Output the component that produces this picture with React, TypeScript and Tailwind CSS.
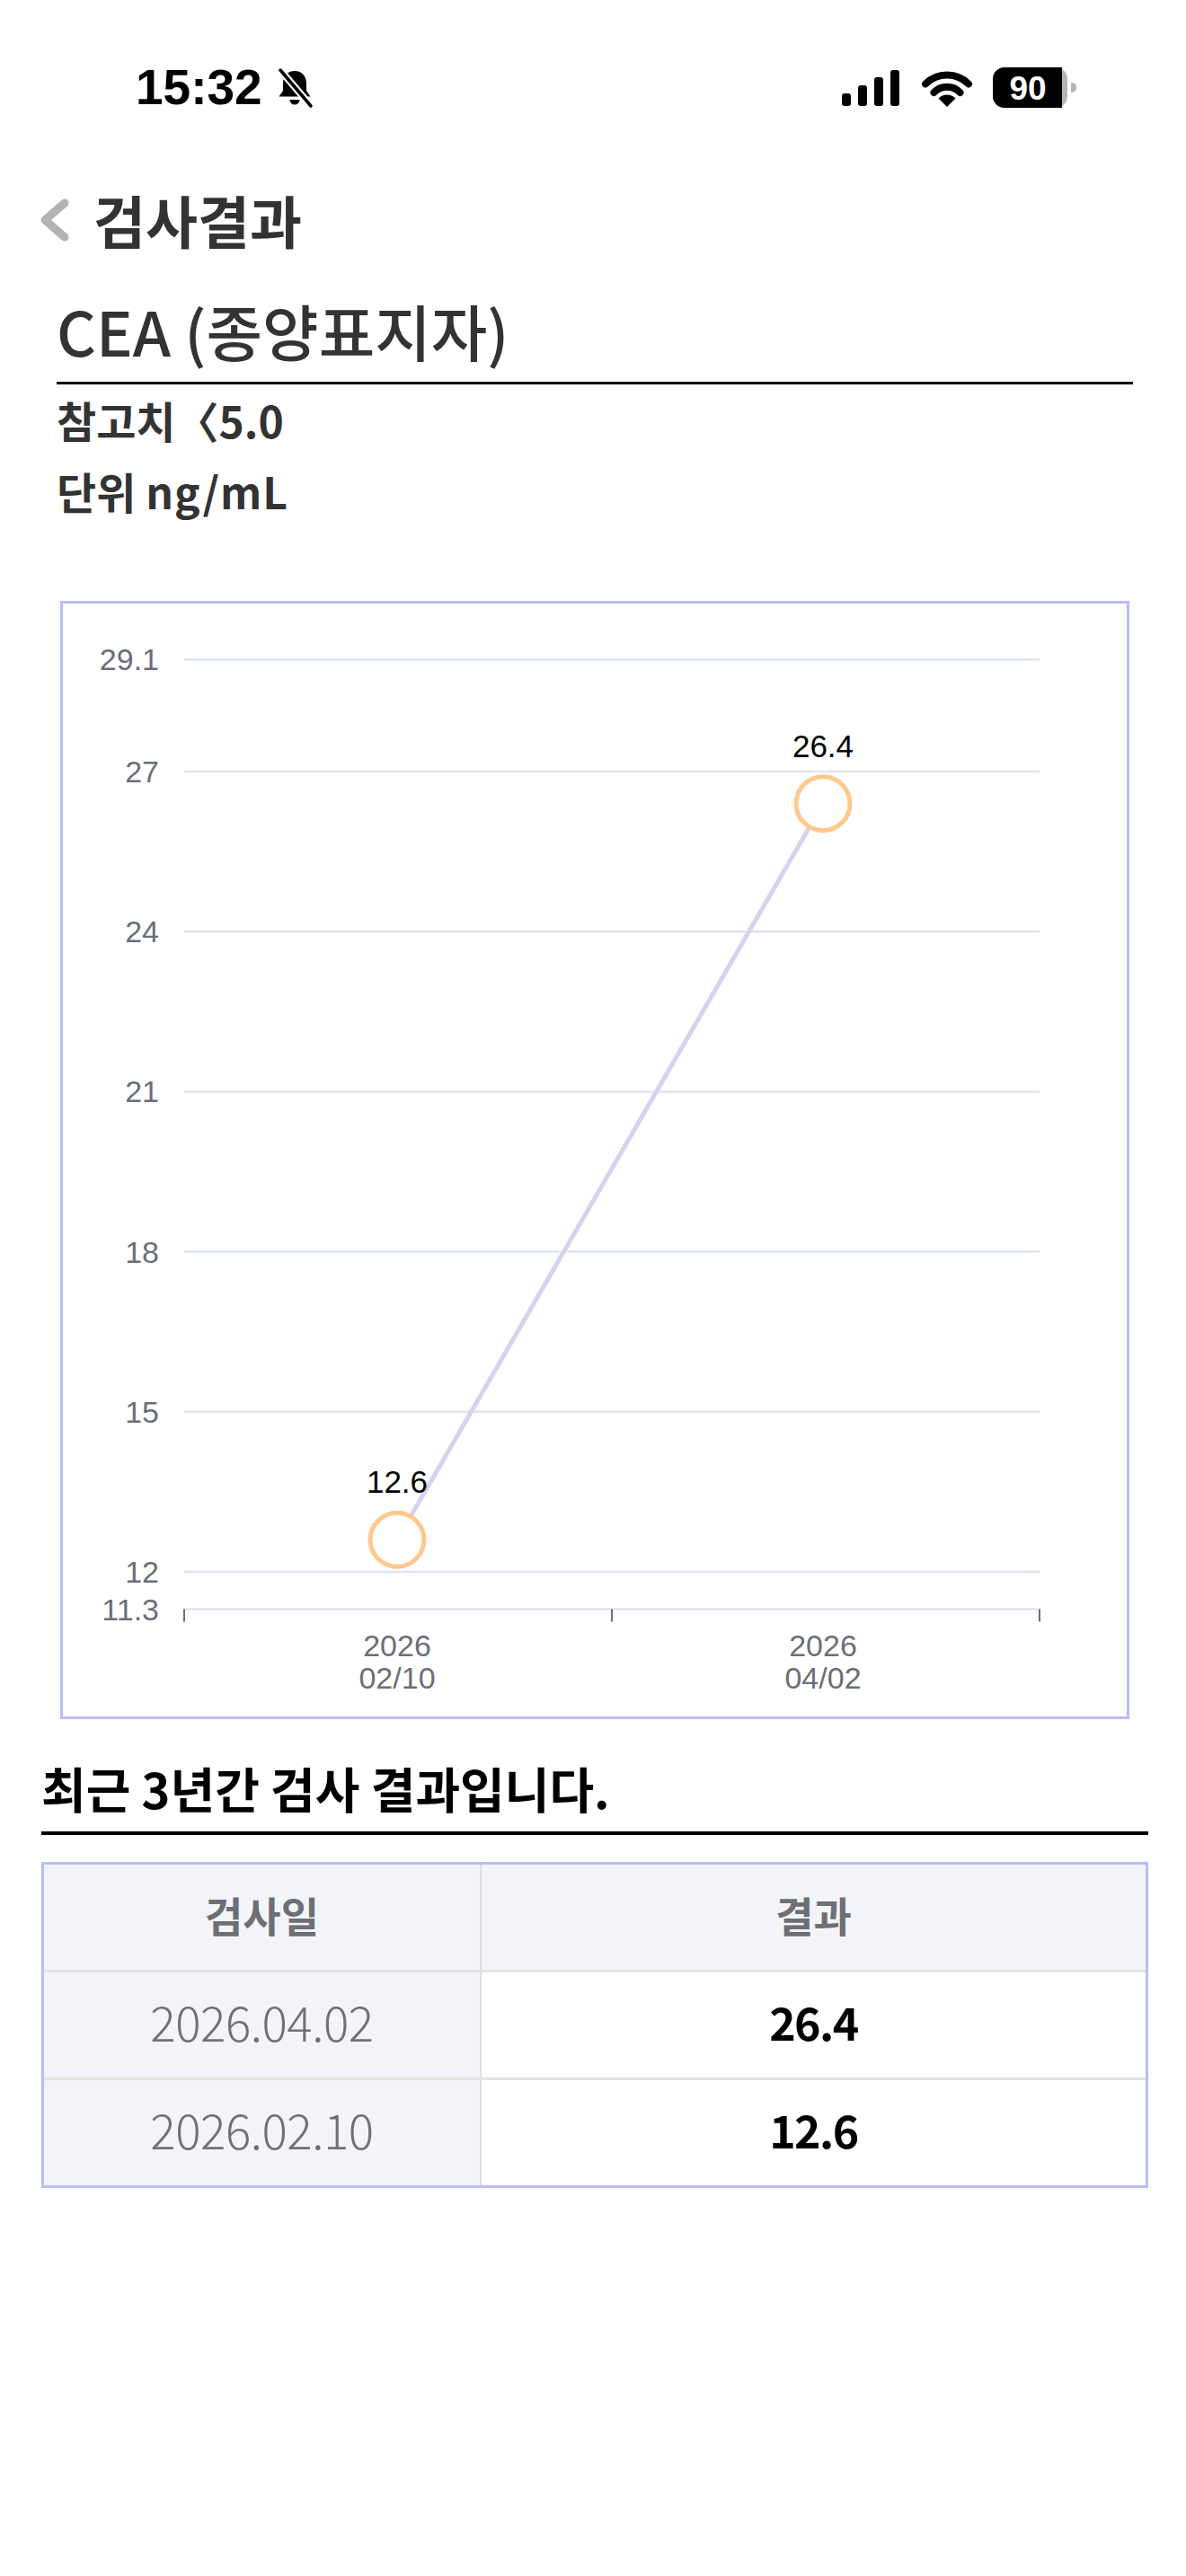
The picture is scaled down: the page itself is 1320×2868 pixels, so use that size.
import React from "react";

const KR = "font-['Noto_Sans_CJK_KR','Noto_Sans',sans-serif]";

const yTicks = [29.1, 27, 24, 21, 18, 15, 12, 11.3];
const yOf = (v: number) => 187 + (27 - v) * 59.4;

const points = [
  { x: 372, v: 12.6, year: "2026", day: "02/10" },
  { x: 846, v: 26.4, year: "2026", day: "04/02" },
];

const rows = [
  { date: "2026.04.02", value: "26.4" },
  { date: "2026.02.10", value: "12.6" },
];

const BellSlash = () => (
  <svg width="42" height="46" viewBox="0 0 42 46">
    <path d="M21 4c-8 0-13 6-13 14v8l-4.5 6.5h35L34 26v-8c0-8-5-14-13-14z" fill="#000" />
    <path d="M15.5 36a5.5 5.5 0 0 0 11 0z" fill="#000" />
    <line x1="5" y1="3" x2="39" y2="43" stroke="#fff" strokeWidth="8" />
    <line x1="5" y1="3" x2="39" y2="43" stroke="#000" strokeWidth="3.5" strokeLinecap="round" />
  </svg>
);

const Signal = () => (
  <svg width="64" height="40" viewBox="0 0 64 40">
    <rect x="0" y="26" width="10" height="14" rx="3" fill="#000" />
    <rect x="18" y="17" width="10" height="23" rx="3" fill="#000" />
    <rect x="36" y="8" width="10" height="32" rx="3" fill="#000" />
    <rect x="54" y="0" width="10" height="40" rx="3" fill="#000" />
  </svg>
);

const Wifi = () => (
  <svg width="58" height="42" viewBox="0 0 58 42">
    <path d="M5 16.5A34 34 0 0 1 53 16.5" fill="none" stroke="#000" strokeWidth="8" strokeLinecap="round" />
    <path d="M14.5 26A20 20 0 0 1 43.5 26" fill="none" stroke="#000" strokeWidth="8" strokeLinecap="round" />
    <path d="M29 42L19.5 32.5A13.5 13.5 0 0 1 38.5 32.5Z" fill="#000" />
  </svg>
);

const Battery = () => (
  <svg width="93" height="45" viewBox="0 0 93 45">
    <rect x="0" y="0" width="83" height="45" rx="13" fill="#b5b5b5" />
    <path d="M13 0h64v45H13A13 13 0 0 1 0 32V13A13 13 0 0 1 13 0z" fill="#000" />
    <path d="M87 17h1a5 5 0 0 1 5 5v1a5 5 0 0 1-5 5h-1z" fill="#b5b5b5" />
    <text
      x="39"
      y="36"
      textAnchor="middle"
      fontFamily="Liberation Sans, Arial, sans-serif"
      fontWeight="700"
      fontSize="37"
      fill="#fff"
    >
      90
    </text>
  </svg>
);

const Chart = () => (
  <svg width="1184" height="1239" viewBox="0 0 1184 1239" className="block">
    {yTicks.map(v => (
      <g key={v}>
        <line x1="135" x2="1087" y1={yOf(v)} y2={yOf(v)} stroke="#dfe4f1" strokeWidth="2.5" />
        <text
          x="107"
          y={yOf(v) + 12}
          textAnchor="end"
          fontFamily="Liberation Sans, Arial, sans-serif"
          fontSize="34"
          fill="#6b6e78"
        >
          {v}
        </text>
      </g>
    ))}
    {[135, 611, 1087].map(x => (
      <line key={x} x1={x} x2={x} y1={yOf(11.3)} y2={yOf(11.3) + 14} stroke="#6b6e78" strokeWidth="2" />
    ))}
    {points.map(p => (
      <g key={p.day} fontFamily="Liberation Sans, Arial, sans-serif" fontSize="34" fill="#6b6e78" textAnchor="middle">
        <text x={p.x} y="1172">
          {p.year}
        </text>
        <text x={p.x} y="1208">
          {p.day}
        </text>
      </g>
    ))}
    <line x1={points[0].x} y1={yOf(points[0].v)} x2={points[1].x} y2={yOf(points[1].v)} stroke="#d6d2ee" strokeWidth="5" />
    {points.map(p => (
      <g key={p.v}>
        <circle cx={p.x} cy={yOf(p.v)} r="30" fill="#fff" stroke="#ffc98e" strokeWidth="5" />
        <text
          x={p.x}
          y={yOf(p.v) - 52}
          textAnchor="middle"
          fontFamily="Liberation Sans, Arial, sans-serif"
          fontSize="35"
          fill="#000"
        >
          {p.v}
        </text>
      </g>
    ))}
  </svg>
);

export default function App() {
  return (
    <div className={`w-[1320px] min-h-[2868px] bg-white ${KR}`}>
      {/* status bar */}
      <div className="flex items-center h-[45px] mt-[75px] mb-[73px]">
        <div className="flex items-center ml-[151px]">
          <span className="font-['Liberation_Sans',Arial,sans-serif] font-bold text-[55px] leading-none text-black">
            15:32
          </span>
          <div className="ml-[15px]">
            <BellSlash />
          </div>
        </div>
        <div className="flex items-center ml-auto mr-[122px]">
          <Signal />
          <div className="ml-[24px]">
            <Wifi />
          </div>
          <div className="ml-[22px]">
            <Battery />
          </div>
        </div>
      </div>

      {/* nav */}
      <div className="flex items-center h-[100px]">
        <svg width="32" height="48" viewBox="0 0 32 48" className="ml-[45px] mt-[4px]">
          <polyline points="27,5 5,24 27,43" fill="none" stroke="#b3b3b3" strokeWidth="9" strokeLinecap="round" strokeLinejoin="round" />
        </svg>
        <h1 className="ml-[27px] text-[63px] font-bold text-[#333333] leading-none">검사결과</h1>
      </div>

      {/* test info */}
      <div className="pl-[63px] pr-[59px] mt-[35px]">
        <h2 className="text-[68px] font-medium text-[#333333] leading-[80px]">CEA (종양표지자)</h2>
        <div className="h-[3px] bg-black mt-[17px]" />
        <div className="text-[48px] font-semibold text-[#333333] leading-[79px]">
          <p>참고치〈5.0</p>
          <p>
            단위 <span className="tracking-[1px]">ng/mL</span>
          </p>
        </div>

        <div className="mx-[4px] mt-[83px] border-[3px] border-[#b9bdf6] bg-white">
          <Chart />
        </div>
      </div>

      {/* history */}
      <div className="pl-[46px] pr-[42px]">
        <h3 className="mt-[42px] text-[54px] font-bold text-black leading-[70px]">최근 3년간 검사 결과입니다.</h3>
        <div className="h-[4px] bg-black mt-[13px]" />

        <div className="mt-[30px] border-[3px] border-[#b9bdf6]">
          <div className="grid grid-cols-[487px_1fr] h-[117px] bg-[#f3f4f9]">
            <div className="flex items-center justify-center pb-[6px] border-r-2 border-[#dedede] text-[46px] font-bold text-[#6d6f73]">
              검사일
            </div>
            <div className="flex items-center justify-center pb-[6px] text-[46px] font-bold text-[#6d6f73]">결과</div>
          </div>
          {rows.map(r => (
            <div key={r.date} className="grid grid-cols-[487px_1fr] h-[120px] border-t-[3px] border-[#e3e3e3]">
              <div className="flex items-center justify-center pb-[8px] bg-[#f3f4f9] border-r-2 border-[#dedede] text-[53px] font-light text-[#6f7074] tracking-[-0.5px]">
                {r.date}
              </div>
              <div className="flex items-center justify-center pb-[8px] bg-white text-[50px] font-bold text-black tracking-[-1.5px]">
                {r.value}
              </div>
            </div>
          ))}
        </div>
      </div>
    </div>
  );
}
